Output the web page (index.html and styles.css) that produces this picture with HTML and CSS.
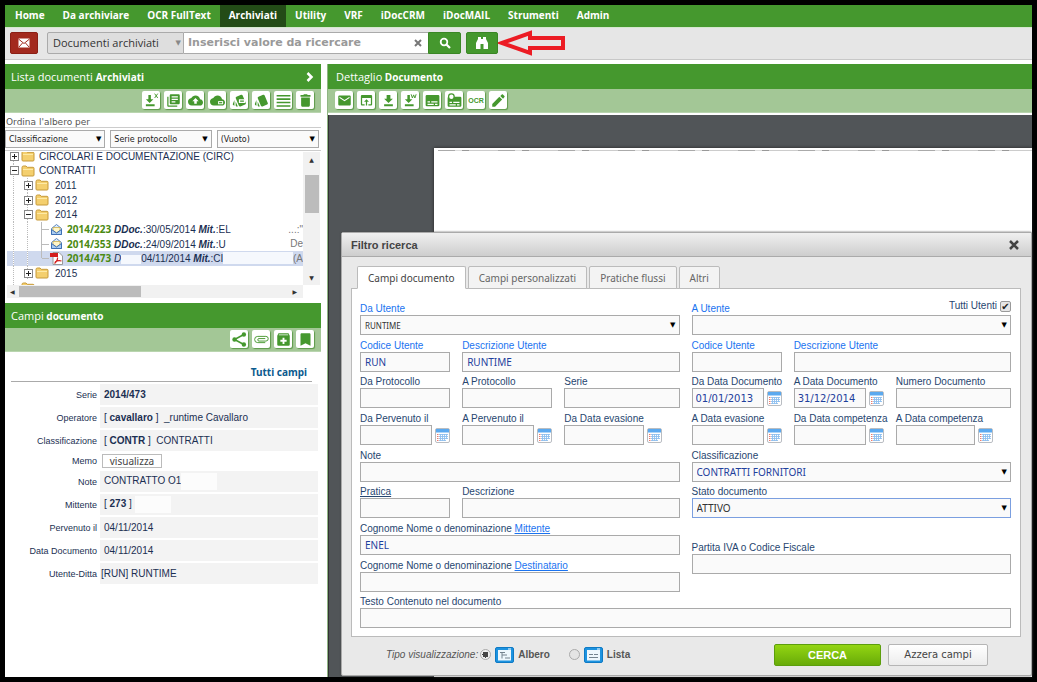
FILE: index.html
```html
<!DOCTYPE html>
<html lang="it">
<head>
<meta charset="utf-8">
<title>Archiviati</title>
<link rel="stylesheet" href="styles.css">
</head>
<body>
<svg class="defs" aria-hidden="true">
  <symbol id="folder" viewBox="0 0 14 12"><path d="M1 2.500Q1 1 2.500 1H5l1.200 1.300H12q1 0 1 1V10q0 1-1 1H2q-1 0-1-1z" fill="#f4cf6e" stroke="#c79a3a"/><path d="M2 4.500h10" stroke="#fdeaa6"/></symbol>
  <symbol id="letter" viewBox="0 0 13 13"><path d="M1.500 5.500 6.500 1.500l5 4v6h-10z" fill="#dcecfb" stroke="#5c86bd"/><path d="M3 4.500h7v3L6.500 10 3 7.500z" fill="#fff6c9" stroke="#c9a63c" stroke-width=".7"/><path d="M1.500 6.500 6.500 10l5-3.500v5h-10z" fill="#a9ccf2" stroke="#3e70b4"/></symbol>
  <symbol id="cal" viewBox="0 0 15 15"><rect x=".5" y=".5" width="14" height="14" rx="1.500" fill="#fff" stroke="#b9bdc2"/><path d="M1 1h13v3.500H1z" fill="#5ba9ef"/><path d="M4 6.500h9M4 8.500h9M4 10.500h9M4 12.500h7M5.500 6v7M7.500 6v7M9.500 6v7M11.500 6v5" stroke="#8fc0ee" stroke-width=".9"/><path d="M2 6.500h1.500M2 8.500h1.500M2 10.500h1.500M2 12.500h1.500" stroke="#ef7a6a"/></symbol>
  <symbol id="mail" viewBox="0 0 24 24"><path d="M20 4H4c-1.100 0-2 .9-2 2v12c0 1.100.9 2 2 2h16c1.100 0 2-.9 2-2V6c0-1.100-.9-2-2-2zm0 4l-8 5-8-5V6l8 5 8-5v2z"/></symbol>
  <symbol id="down" viewBox="0 0 24 24"><path d="M19 9h-4V3H9v6H5l7 7 7-7zM5 18v3h14v-3H5z"/></symbol>
  <symbol id="cards" viewBox="0 0 24 24"><path d="M2.530 19.650l1.340.56v-9.030l-2.430 5.860c-.41 1.020.08 2.190 1.090 2.610zm19.500-3.700L17.070 3.980c-.31-.75-1.040-1.210-1.810-1.230-.26 0-.53.04-.79.15L7.100 5.950c-.75.31-1.210 1.030-1.230 1.800-.01.27.04.54.15.8l4.960 11.970c.31.76 1.050 1.220 1.830 1.230.26 0 .52-.05.77-.15l7.360-3.050c1.020-.42 1.510-1.590 1.100-2.600zM5.880 19.750c0 1.100.9 2 2 2h1.450l-3.450-8.340v6.340z"/></symbol>
</svg>

<div class="app">
  <nav class="nav">
    <a href="#">Home</a><a href="#">Da archiviare</a><a href="#">OCR FullText</a><a href="#" class="active">Archiviati</a><a href="#">Utility</a><a href="#">VRF</a><a href="#">iDocCRM</a><a href="#">iDocMAIL</a><a href="#">Strumenti</a><a href="#">Admin</a>
  </nav>

  <div class="toolbar">
    <button class="btn-mail" aria-label="Posta"><svg viewBox="0 0 12 10"><path d="M.5 .5h11v9H.5z" fill="#fff"/><path d="M.5 1 6 5.500 11.500 1M1 9l3.500-4M11 9 7.500 5" stroke="#a32a1e" fill="none"/></svg></button>
    <div class="search">
      <span class="pick scope"><select aria-label="Ambito"><option>Documenti archiviati</option></select></span>
      <span class="query"><input type="text" placeholder="Inserisci valore da ricercare" aria-label="Ricerca"><button class="clear" aria-label="Cancella"><svg viewBox="0 0 8 8"><path d="M1 1l6 6M7 1 1 7" stroke="#777" stroke-width="2"/></svg></button></span>
      <button class="btn-green" aria-label="Cerca"><svg viewBox="0 0 12 12"><circle cx="5" cy="5" r="3.300" fill="none" stroke="#fff" stroke-width="1.800"/><path d="M7.500 7.500 11 11" stroke="#fff" stroke-width="2.200"/></svg></button>
    </div>
    <button class="btn-green find" aria-label="Filtro ricerca"><svg viewBox="0 0 14 14"><path d="M3 1h3v2h2V1h3v2l2 4v6H8.500V8h-3v5H1V7l2-4z" fill="#fff"/></svg></button>
    <svg class="arrow" viewBox="0 0 68 26"><path d="M4 13 32 3v5h33v10H32v5z" fill="none" stroke="#ec1c24" stroke-width="4"/></svg>
  </div>

  <main class="main">
    <aside class="side">
      <h2 class="head"><span>Lista documenti <b>Archiviati</b></span><svg viewBox="0 0 8 10"><path d="M1.500 1 5.500 5l-4 4" fill="none" stroke="#fff" stroke-width="2.500"/></svg></h2>
      <div class="icons end">
        <button aria-label="Esporta"><svg viewBox="0 0 24 24"><path d="M14 10h-3V3H7v7H3l6 6 6-6zM3 18v3h14v-3z"/><path d="M17 1l5 7M22 1l-5 7" stroke="#45982e" stroke-width="1.500"/></svg></button>
        <button aria-label="Documenti"><svg viewBox="0 0 24 24"><path d="M4 6H2v14c0 1.100.9 2 2 2h14v-2H4V6zm16-4H8c-1.100 0-2 .9-2 2v12c0 1.100.9 2 2 2h12c1.100 0 2-.9 2-2V4c0-1.100-.9-2-2-2zm-1 9H9V9h10v2zm-4 4H9v-2h6v2zm4-8H9V5h10v2z"/></svg></button>
        <button aria-label="Carica"><svg viewBox="0 0 24 24"><path d="M19.350 10.040C18.670 6.590 15.640 4 12 4 9.110 4 6.600 5.640 5.350 8.040 2.340 8.360 0 10.910 0 14c0 3.310 2.690 6 6 6h13c2.760 0 5-2.240 5-5 0-2.640-2.050-4.780-4.650-4.960zM14 13v4h-4v-4H7l5-5 5 5h-3z"/></svg></button>
        <button aria-label="Cloud"><svg viewBox="0 0 24 24"><path d="M19.350 10.040C18.670 6.590 15.640 4 12 4 9.110 4 6.600 5.640 5.350 8.040 2.340 8.360 0 10.910 0 14c0 3.310 2.690 6 6 6h13c2.760 0 5-2.240 5-5 0-2.640-2.050-4.780-4.650-4.960z"/><path d="M13 13h8v5h-8z" fill="#fff"/><path d="M14.500 15.500h5" stroke="#45982e" stroke-width="2"/></svg></button>
        <button aria-label="Seleziona alcuni"><svg viewBox="0 0 24 24"><use href="#cards"/><path d="M11 10h10v6H11z" fill="#fff"/><path d="M13 13h6" stroke="#45982e" stroke-width="2"/></svg></button>
        <button aria-label="Seleziona"><svg><use href="#cards"/></svg></button>
        <button aria-label="Elenco"><svg viewBox="0 0 24 24"><path d="M1 3h22v2.500H1zM1 8.500h22V11H1zM1 14h22v2.500H1zM1 19.500h22V22H1z"/></svg></button>
        <button aria-label="Elimina"><svg viewBox="0 0 24 24"><path d="M5 19c0 1.500.9 3 2 3h10c1.100 0 2-1.500 2-3V7H5v12zM20 3h-4.500l-1-1h-5l-1 1H4v3h16V3z"/></svg></button>
      </div>
      <p class="sort-label">Ordina l'albero per</p>
      <div class="sorts">
        <span class="pick"><select aria-label="Primo criterio"><option>Classificazione</option></select></span>
        <span class="pick"><select aria-label="Secondo criterio"><option>Serie protocollo</option></select></span>
        <span class="pick"><select aria-label="Terzo criterio"><option>(Vuoto)</option></select></span>
      </div>
      <div class="tree-box">
        <div class="tree-view">
          <ul class="tree">
            <li><i class="g box plus"></i><svg class="fold"><use href="#folder"/></svg><span>CIRCOLARI E DOCUMENTAZIONE (CIRC)</span></li>
            <li><i class="g box"></i><svg class="fold"><use href="#folder"/></svg><span>CONTRATTI</span></li>
            <li class="year"><i class="g"></i><i class="g box plus"></i><svg class="fold"><use href="#folder"/></svg><span>2011</span></li>
            <li class="year"><i class="g"></i><i class="g box plus"></i><svg class="fold"><use href="#folder"/></svg><span>2012</span></li>
            <li class="year"><i class="g"></i><i class="g box"></i><svg class="fold"><use href="#folder"/></svg><span>2014</span></li>
            <li class="doc"><i class="g"></i><i class="g"></i><i class="g tee"></i><svg><use href="#letter"/></svg><span><b class="num">2014/223</b> <b><em>DDoc.</em></b>:30/05/2014 <b><em>Mit.</em></b>:EL</span><span class="tail">...:"</span></li>
            <li class="doc"><i class="g"></i><i class="g"></i><i class="g tee"></i><svg><use href="#letter"/></svg><span><b class="num">2014/353</b> <b><em>DDoc.</em></b>:24/09/2014 <b><em>Mit.</em></b>:U</span><span class="tail">De</span></li>
            <li class="doc sel"><i class="g"></i><i class="g"></i><i class="g tee last"></i><svg viewBox="0 0 13 13"><path d="M3 .5h6l3.500 3.500v8.500H3z" fill="#fff" stroke="#999"/><path d="M0 1h8v4H0z" fill="#d31d1d"/><path d="M4.500 11.500Q8 8 7.500 5.500M5 10q3-2 6.500-1" fill="none" stroke="#d31d1d" stroke-width="1.200"/></svg><span><b class="num">2014/473</b> <em>D</em><span class="wipe short"></span>04/11/2014 <b><em>Mit.</em></b>:CI</span><span class="wipe"></span><span class="tail">(A</span></li>
            <li class="year"><i class="g"></i><i class="g box plus"></i><svg class="fold"><use href="#folder"/></svg><span>2015</span></li>
            <li><i class="g"></i><svg class="fold"><use href="#folder"/></svg></li>
          </ul>
        </div>
        <div class="vscroll"><i>▲</i><i class="thumb"></i><i>▼</i></div>
        <div class="hscroll"><i>◀</i><i class="thumb"></i><i class="dark">▶</i></div>
      </div>

      <h2 class="head">Campi <b>&nbsp;documento</b></h2>
      <div class="icons end">
        <button aria-label="Condividi"><svg viewBox="0 0 24 24"><path d="M19 4 4 12l15 8" fill="none" stroke="#45982e" stroke-width="2.500"/><circle cx="19" cy="4" r="3.500"/><circle cx="4" cy="12" r="3.500"/><circle cx="19" cy="20" r="3.500"/></svg></button>
        <button aria-label="Allegati"><svg viewBox="0 0 24 24"><path d="M18 17H6a5 5 0 0 1 0-10H19a3.500 3.500 0 0 1 0 7.500H8a1.500 1.500 0 0 1 0-4h10" fill="none" stroke="#45982e" stroke-width="1.500"/></svg></button>
        <button aria-label="Aggiungi"><svg viewBox="0 0 24 24"><path fill-rule="evenodd" d="M4 2h16l2 4v14q0 2-2 2H4q-2 0-2-2V6zM4.500 5h15v-1h-15zM10.500 9v3.500H7v3h3.500V19h3v-3.500H17v-3h-3.500V9z"/></svg></button>
        <button aria-label="Segnalibro"><svg viewBox="0 0 24 24"><path d="M18 2H6c-1.100 0-2 .9-2 2v18l8-4 8 4V4c0-1.100-.9-2-2-2z"/></svg></button>
      </div>
      <div class="fields">
        <a href="#" class="all">Tutti campi</a>
        <table>
          <tr><th>Serie</th><td><b>2014/473</b></td></tr>
          <tr><th>Operatore</th><td>[ <b>cavallaro</b> ] &nbsp;_runtime Cavallaro</td></tr>
          <tr><th>Classificazione</th><td>[ <b>CONTR</b> ] &nbsp;CONTRATTI</td></tr>
          <tr class="memo"><th>Memo</th><td><button>visualizza</button></td></tr>
          <tr><th>Note</th><td>CONTRATTO O1<span class="blank"></span></td></tr>
          <tr><th>Mittente</th><td>[ <b>273</b> ] <span class="blank"></span></td></tr>
          <tr><th>Pervenuto il</th><td>04/11/2014</td></tr>
          <tr><th>Data Documento</th><td>04/11/2014</td></tr>
          <tr><th>Utente-Ditta</th><td class="tight">[RUN] RUNTIME</td></tr>
        </table>
      </div>
    </aside>

    <section class="detail">
      <h2 class="head">Dettaglio <b>&nbsp;Documento</b></h2>
      <div class="icons">
        <button aria-label="Invia"><svg><use href="#mail"/></svg></button>
        <button aria-label="Apri"><svg viewBox="0 0 24 24"><path d="M19 3H5c-1.110 0-2 .9-2 2v13c0 1.100.89 2 2 2h4v-2H5V8h14v10h-4v2h4c1.100 0 2-.9 2-2V5c0-1.100-.89-2-2-2zm-7 7l-4 4h3v6h2v-6h3l-4-4z"/></svg></button>
        <button aria-label="Scarica"><svg><use href="#down"/></svg></button>
        <button aria-label="Scarica Word"><svg viewBox="0 0 24 24"><path d="M14 10h-3V3H7v7H3l6 6 6-6zM3 18v3h14v-3z"/><path d="M13 2l2 6 2-5 2 5 2-6" fill="none" stroke="#45982e" stroke-width="1.500"/></svg></button>
        <button aria-label="Scheda"><svg viewBox="0 0 24 24"><path fill-rule="evenodd" d="M3 3h18q2 0 2 2v14q0 2-2 2H3q-2 0-2-2V5q0-2 2-2zM4 13h4v2H4zm6 0h10v2H10zm-6 4h10v2H4zm12 0h4v2h-4z"/></svg></button>
        <button aria-label="Scheda timbro"><svg viewBox="0 0 24 24"><path fill-rule="evenodd" d="M3 6h18q2 0 2 2v12q0 2-2 2H3q-2 0-2-2V8q0-2 2-2zM4 14h4v2H4zm6 0h10v2H10zm-6 4h10v2H4zm12 0h4v2h-4z"/><circle cx="7" cy="6" r="4.500" fill="#fff" stroke="#45982e" stroke-width="2"/></svg></button>
        <button class="ocr">OCR</button>
        <button aria-label="Modifica"><svg viewBox="0 0 24 24"><path d="M2 17.500V22h4.500L17.810 10.500l-4.500-4.500zM21.500 6.500c.5-.5.500-1.200 0-1.700l-2.500-2.500c-.5-.5-1.200-.5-1.700 0l-2.500 2.300 4.500 4.500z"/></svg></button>
      </div>
      <div class="viewer"><div class="paper"></div></div>
    </section>

    <div class="dialog" role="dialog" aria-labelledby="dlg">
      <header><h3 id="dlg">Filtro ricerca</h3><button aria-label="Chiudi"><svg viewBox="0 0 10 10"><path d="M1 1l8 8M9 1 1 9" stroke="#444" stroke-width="2.500"/></svg></button></header>
      <div class="tabs"><button class="on">Campi documento</button><button>Campi personalizzati</button><button>Pratiche flussi</button><button>Altri</button></div>
      <form class="form">
        <div class="f w3 blue"><label for="a1">Da Utente</label><span class="pick"><select id="a1" class="small"><option>RUNTIME</option></select></span></div>
        <div class="f w3 blue"><div class="split"><label for="a2">A Utente</label><span class="check"><label for="all">Tutti Utenti</label><input type="checkbox" id="all" checked></span></div><span class="pick"><select id="a2"><option></option></select></span></div>

        <div class="f blue"><label for="b1">Codice Utente</label><input id="b1" value="RUN"></div>
        <div class="f w2 blue"><label for="b2">Descrizione Utente</label><input id="b2" value="RUNTIME"></div>
        <div class="f blue"><label for="b3">Codice Utente</label><input id="b3"></div>
        <div class="f w2 blue"><label for="b4">Descrizione Utente</label><input id="b4"></div>

        <div class="f"><label for="c1">Da Protocollo</label><input id="c1"></div>
        <div class="f"><label for="c2">A Protocollo</label><input id="c2"></div>
        <div class="f"><label for="c3">Serie</label><input id="c3"></div>
        <div class="f"><label for="c4">Da Data Documento</label><span class="date"><input id="c4" value="01/01/2013"><svg><use href="#cal"/></svg></span></div>
        <div class="f"><label for="c5">A Data Documento</label><span class="date"><input id="c5" value="31/12/2014"><svg><use href="#cal"/></svg></span></div>
        <div class="f"><label for="c6">Numero Documento</label><input id="c6"></div>

        <div class="f"><label for="d1">Da Pervenuto il</label><span class="date"><input id="d1"><svg><use href="#cal"/></svg></span></div>
        <div class="f"><label for="d2">A Pervenuto il</label><span class="date"><input id="d2"><svg><use href="#cal"/></svg></span></div>
        <div class="f"><label for="d3">Da Data evasione</label><span class="date wide"><input id="d3"><svg><use href="#cal"/></svg></span></div>
        <div class="f"><label for="d4">A Data evasione</label><span class="date"><input id="d4"><svg><use href="#cal"/></svg></span></div>
        <div class="f"><label for="d5">Da Data competenza</label><span class="date"><input id="d5"><svg><use href="#cal"/></svg></span></div>
        <div class="f"><label for="d6">A Data competenza</label><span class="date wide"><input id="d6"><svg><use href="#cal"/></svg></span></div>

        <div class="f w3"><label for="e1">Note</label><input id="e1"></div>
        <div class="f w3"><label for="e2">Classificazione</label><span class="pick"><select id="e2" class="ink"><option>CONTRATTI FORNITORI</option></select></span></div>

        <div class="f"><label for="f1"><u>Pratica</u></label><input id="f1"></div>
        <div class="f w2"><label for="f2">Descrizione</label><input id="f2"></div>
        <div class="f w3"><label for="f3">Stato documento</label><span class="pick"><select id="f3" class="focus"><option>ATTIVO</option></select></span></div>

        <div class="f w3"><label for="g1">Cognome Nome o denominazione <a href="#">Mittente</a></label><input id="g1" value="ENEL"></div>
        <div class="f w3 tall"><label for="g2">Partita IVA o Codice Fiscale</label><input id="g2"></div>
        <div class="f w3"><label for="h1">Cognome Nome o denominazione <a href="#">Destinatario</a></label><input id="h1"></div>
        <div class="f w6"><label for="i1">Testo Contenuto nel documento</label><input id="i1"></div>
      </form>
      <footer>
        <em>Tipo visualizzazione:</em>
        <label class="view"><input type="radio" name="v" checked><svg viewBox="0 0 19 16"><rect x=".5" y=".5" width="18" height="15" rx="1.500" fill="#1d93e0" stroke="#0f7ac4"/><path d="M3 3h13v10.500H3z" fill="#eef7fd"/><path d="M5 5.500h5M7 5.500v6M7 8h5M10 11h5" stroke="#74838f" fill="none"/><path d="M13 2h3" stroke="#fff"/></svg>Albero</label>
        <label class="view"><input type="radio" name="v"><svg viewBox="0 0 19 16"><rect x=".5" y=".5" width="18" height="15" rx="1.500" fill="#1d93e0" stroke="#0f7ac4"/><path d="M3 3h13v10.500H3z" fill="#eef7fd"/><path d="M5 7.500h4M10 7.500h4M5 10.500h9" stroke="#74838f" fill="none"/><path d="M13 2h3" stroke="#fff"/></svg>Lista</label>
        <button class="go">CERCA</button>
        <button class="reset">Azzera campi</button>
      </footer>
    </div>
  </main>
</div>
</body>
</html>
```
FILE: styles.css
```css
* { box-sizing: border-box; }
body { margin: 0; background: #000; font: 10px "Liberation Sans", Arial, sans-serif; color: #1b2f52; }
button, input, select { font: inherit; color: inherit; margin: 0; padding: 0; border-radius: 0; }
button { display: flex; align-items: center; justify-content: center; cursor: pointer; }
h2, h3, p, ul { margin: 0; padding: 0; }
svg { display: block; flex: none; }
.defs { position: absolute; width: 0; height: 0; }
.app { height: 100vh; border: 5px solid #000; background: #fff; display: flex; flex-direction: column; }

.nav { display: flex; height: 23px; padding-left: 1px; background: #45982e; border-bottom: 1px solid #d5e8cf; }
.nav a { display: flex; align-items: center; padding: 0 9px 2px; color: #fff; text-decoration: none; font: bold 10px "Open Sans", sans-serif; }
.nav .active { background: #234b17; }

.toolbar { display: flex; align-items: center; height: 32px; padding: 0 5px 2px; background: #e6e6e6; border-bottom: 1px solid #c8c8c8; }
.btn-mail { width: 28px; height: 22px; background: #a32a1e; border: 1px solid #8b1f15; border-radius: 2px; }
.btn-mail svg { width: 12px; height: 10px; }
.search { display: flex; width: 414px; height: 22px; margin: 0 5px 0 9px; }
.scope { width: 137px; }
.pick { position: relative; display: block; }
.pick select { appearance: none; width: 100%; height: 100%; outline: 0; }
.pick::after { content: "▼"; position: absolute; right: 4px; top: 0; bottom: 0; display: flex; align-items: center; font: 7px "DejaVu Sans", sans-serif; color: #000; pointer-events: none; }
.scope select { background: #dedede; border: 1px solid #aaa; border-radius: 2px 0 0 2px; padding-left: 5px; font: 11px "Open Sans", sans-serif; color: #333; }
.scope::after { right: 3px; color: #888; }
.query { display: flex; flex: 1; background: #fff; border: 1px solid #aaa; border-width: 1px 0; }
.query input { flex: 1; min-width: 0; border: 0; padding-left: 4px; font: bold 11px "DejaVu Sans", sans-serif; }
.query input::placeholder { color: #999; }
.clear { width: 20px; border: 0; background: none; }
.clear svg { width: 8px; height: 8px; }
.btn-green { width: 33px; height: 22px; background: #45982e; border: 1px solid #3a8725; border-radius: 0 2px 2px 0; }
.btn-green svg { width: 12px; height: 12px; }
.find { width: 32px; border-radius: 2px; }
.find svg { width: 14px; height: 14px; }
.arrow { width: 68px; height: 26px; }

.main { position: relative; flex: 1; min-height: 0; margin-top: 4px; display: flex; gap: 6px; }
.side { width: 316px; flex: none; display: flex; flex-direction: column; }
.detail { flex: 1; display: flex; flex-direction: column; border-left: 1px solid #8fb583; }
.head { display: flex; align-items: center; justify-content: space-between; height: 25px; padding: 0 7px 0 6px; background: #45982e; color: #fff; font: 11px "Open Sans", sans-serif; }
.head:not(:first-child), .detail .head { justify-content: flex-start; }
.detail .head { padding-left: 8px; }
.head b { font-weight: bold; font-size: 10px; }
.head svg { width: 8px; height: 10px; }
.icons { display: flex; align-items: center; gap: 4px; height: 24px; padding: 0 7px 1px; background: #a3c796; border-bottom: 1px solid #b9d5af; }
.end { justify-content: flex-end; }
.icons button { width: 18px; height: 18px; background: #fff; border: 0; border-radius: 2px; box-shadow: 1px 1px 1px #5c9a49; color: #45982e; }
.icons svg { width: 15px; height: 15px; fill: #45982e; }
.icons .ocr { font: bold 7px "Liberation Sans", Arial, sans-serif; }

.sort-label { height: 15px; padding: 3px 1px 0; font: 9px/12px "DejaVu Sans", sans-serif; color: #555; border-bottom: 1px solid #ccc; }
.sorts { display: grid; grid-template-columns: 101fr 102fr 103fr; gap: 5px; height: 23px; padding: 2px 2px 2px 0; border-bottom: 1px solid #ccc; }
.sorts select { border: 1px solid #aaa; background: #fafafa; padding-left: 3px; font: 8px "DejaVu Sans", sans-serif; color: #222; }
.tree-box { display: grid; grid-template-columns: 1fr 17px; grid-template-rows: 133px 13px; padding: 1px 1px 0 2px; margin-bottom: 5px; }
.tree-view { overflow: hidden; }
.tree { display: flex; flex-direction: column; height: 146px; margin-top: -3px; list-style: none; }
.tree li { flex: 1; display: flex; align-items: center; white-space: nowrap; overflow: hidden; }
.tree li > span { margin-left: 4px; }
.tree .year > span { margin-left: 6px; }
.tree svg { width: 13px; height: 13px; margin-left: 1px; }
.tree .fold { width: 14px; height: 12px; margin: 0; }
.g { flex: none; align-self: stretch; width: 14px; background: repeating-linear-gradient(#bbb 0 1px, #fff 1px 2px) 6px 0 / 1px 100% no-repeat; display: flex; align-items: center; justify-content: center; }
.tee { background: linear-gradient(#bbb, #bbb) 6px 0 / 1px 100% no-repeat, linear-gradient(#bbb, #bbb) 7px 7px / 7px 1px no-repeat; }
.last { background: linear-gradient(#bbb, #bbb) 6px 0 / 1px 7px no-repeat, linear-gradient(#bbb, #bbb) 7px 7px / 7px 1px no-repeat; }
.box::before { content: ""; box-sizing: border-box; width: 9px; height: 9px; border: 1px solid #888; background: linear-gradient(#222, #222) center / 5px 1px no-repeat, #fff; }
.plus::before { background: linear-gradient(#222, #222) center / 5px 1px no-repeat, linear-gradient(#222, #222) center / 1px 5px no-repeat, #fff; }
.num { font: bold 10px "Noto Sans", sans-serif; color: #4a8a12; }
.tree .sel { background: #cfd9ee; }
.tree li > .tail { margin-left: auto; color: #777; }
.tree li > .wipe { flex: 1; height: 12px; margin-left: 0; background: #f5f8fd; }
.tree .short { display: inline-block; width: 20px; height: 9px; vertical-align: middle; background: #f5f8fd; }
.vscroll { background: #f1f1f1; display: flex; flex-direction: column; align-items: center; padding: 4px 2px; }
.vscroll i, .hscroll i { font: 6px "DejaVu Sans", sans-serif; color: #333; }
.vscroll .thumb { width: 14px; height: 38px; margin: 12px 0 auto; background: #bcbcbc; }
.hscroll { background: #f1f1f1; display: flex; align-items: center; padding: 0 6px 0 3px; }
.hscroll .thumb { width: 122px; height: 11px; margin: 0 auto 0 4px; background: #bcbcbc; }

.fields { padding: 13px 3px 0 6px; }
.all { display: block; padding: 0 5px 0 0; margin-right: 6px; height: 17px; text-align: right; border-bottom: 1px solid #aaa; font: bold 10px/15px "Noto Sans", sans-serif; color: #0b5a8e; text-decoration: none; }
.fields table { width: 100%; border-spacing: 0 2px; table-layout: fixed; }
.fields th { width: 89px; padding: 0 3px 0 0; text-align: right; font-weight: normal; font-size: 9px; }
.fields td { height: 21px; padding: 0 4px; background: #f3f3f3; background-clip: padding-box; }
.fields .memo th, .fields .memo td { height: 16px; background: none; }
.memo td { padding: 0 2px; }
.memo button { width: 60px; height: 14px; background: #fff; border: 1px solid #bbb; font: 10px "Noto Sans", sans-serif; color: #444; }
.fields .tight { padding-left: 1px; }
.blank { display: inline-block; width: 36px; height: 17px; background: #fcfcfc; vertical-align: middle; }

.viewer { flex: 1; margin-top: 2px; padding: 33px 0 0 105px; background: #515558; border-left: 1px solid #333; display: flex; }
.paper { flex: 1; box-shadow: 0 0 3px #222; background: repeating-linear-gradient(90deg, #aaa 0 17px, #ddd 17px 24px, #999 24px 31px, #ccc 31px 60px) 4px 2px / 100% 1px no-repeat, #fff; }

.dialog { position: absolute; left: 336px; right: 0; top: 168px; bottom: 1px; display: flex; flex-direction: column; background: #e9e9e9; border: 1px solid #aaa; border-radius: 2px; box-shadow: 0 0 2px #444; }
.dialog header { display: flex; align-items: center; justify-content: space-between; height: 24px; padding: 0 12px 0 9px; background: linear-gradient(#f0f0f0, #cdcdcd); border-bottom: 1px solid #aaa; }
.dialog h3 { font: bold 11px "Liberation Sans", Arial, sans-serif; color: #444; }
.dialog header button { border: 0; background: none; }
.dialog header svg { width: 10px; height: 10px; }
.tabs { display: flex; gap: 2px; margin: 9px 0 0 15px; position: relative; z-index: 1; }
.tabs button { height: 23px; padding: 0 10px; background: #f3f3f3; border: 1px solid #bbb; border-radius: 2px 2px 0 0; font: 10px "Noto Sans", sans-serif; color: #666; }
.tabs .on { background: #fff; border-bottom-color: #fff; color: #444; }
.form { flex: 1; min-height: 0; display: grid; grid-template-columns: 90fr 90fr 115fr 90fr 90fr 115fr; grid-template-rows: repeat(9, 1fr); column-gap: 12px; margin: -1px 10px 0 9px; padding: 14px 9px 3px 8px; background: #fff; border: 1px solid #bbb; }
.f { min-width: 0; display: flex; flex-direction: column; }
.w2 { grid-column: span 2; }
.w3 { grid-column: span 3; }
.w6 { grid-column: span 6; }
.tall { grid-row: span 2; align-self: center; padding-bottom: 3px; }
.f label { height: 12px; line-height: 12px; white-space: nowrap; color: #27466f; }
.blue label, .f a { color: #1a73f0; }
.f input:not([type]), .f select { width: 100%; min-width: 0; height: 20px; padding: 0 4px; border: 1px solid #aaa; background: #fafafa; font: 10px "Noto Sans", sans-serif; color: #1e409c; }
.f .pick { height: 20px; }
.f select { color: #333; }
.f .small { font-size: 8px; }
.f .ink { color: #1e409c; }
.f .focus { border-color: #7b9fe0; }
.date { display: flex; align-items: center; gap: 3px; }
.f .date input { flex: 1; font-family: "DejaVu Sans", sans-serif; padding: 0 3px; }
.date svg { width: 15px; height: 15px; }
.wide { padding-right: 18px; }
.split { display: flex; justify-content: space-between; }
.check { display: flex; align-items: center; height: 12px; gap: 3px; padding-bottom: 6px; }
.blue .check label { color: #27466f; }
.check input { appearance: none; width: 11px; height: 11px; border: 1px solid #999; border-radius: 2px; background: #e6e6e6; display: flex; align-items: center; justify-content: center; }
.check input:checked::before { content: "✔"; font: 10px "DejaVu Sans", sans-serif; color: #222; }

.dialog footer { display: flex; align-items: center; height: 38px; padding: 0 43px 3px 44px; color: #555; }
.view { display: flex; align-items: center; font-weight: bold; margin-right: 17px; }
.view input { appearance: none; width: 11px; height: 11px; border: 1px solid #aaa; border-radius: 50%; margin: 0 4px 0 2px; background: #e4e4e4; }
.view input:checked { background: radial-gradient(#444 0 3px, #eee 3px); }
.view svg { width: 19px; height: 16px; margin-right: 4px; }
.go { width: 107px; height: 22px; margin-left: auto; border: 1px solid #5c9e0c; border-radius: 2px; background: linear-gradient(#93d512, #68ab08); color: #fff; font: bold 11px "Liberation Sans", Arial, sans-serif; }
.reset { width: 100px; height: 22px; margin-left: 7px; border: 1px solid #b5b5b5; border-radius: 2px; background: linear-gradient(#fff, #ececec); color: #444; font: 10px "DejaVu Sans", sans-serif; }
```
